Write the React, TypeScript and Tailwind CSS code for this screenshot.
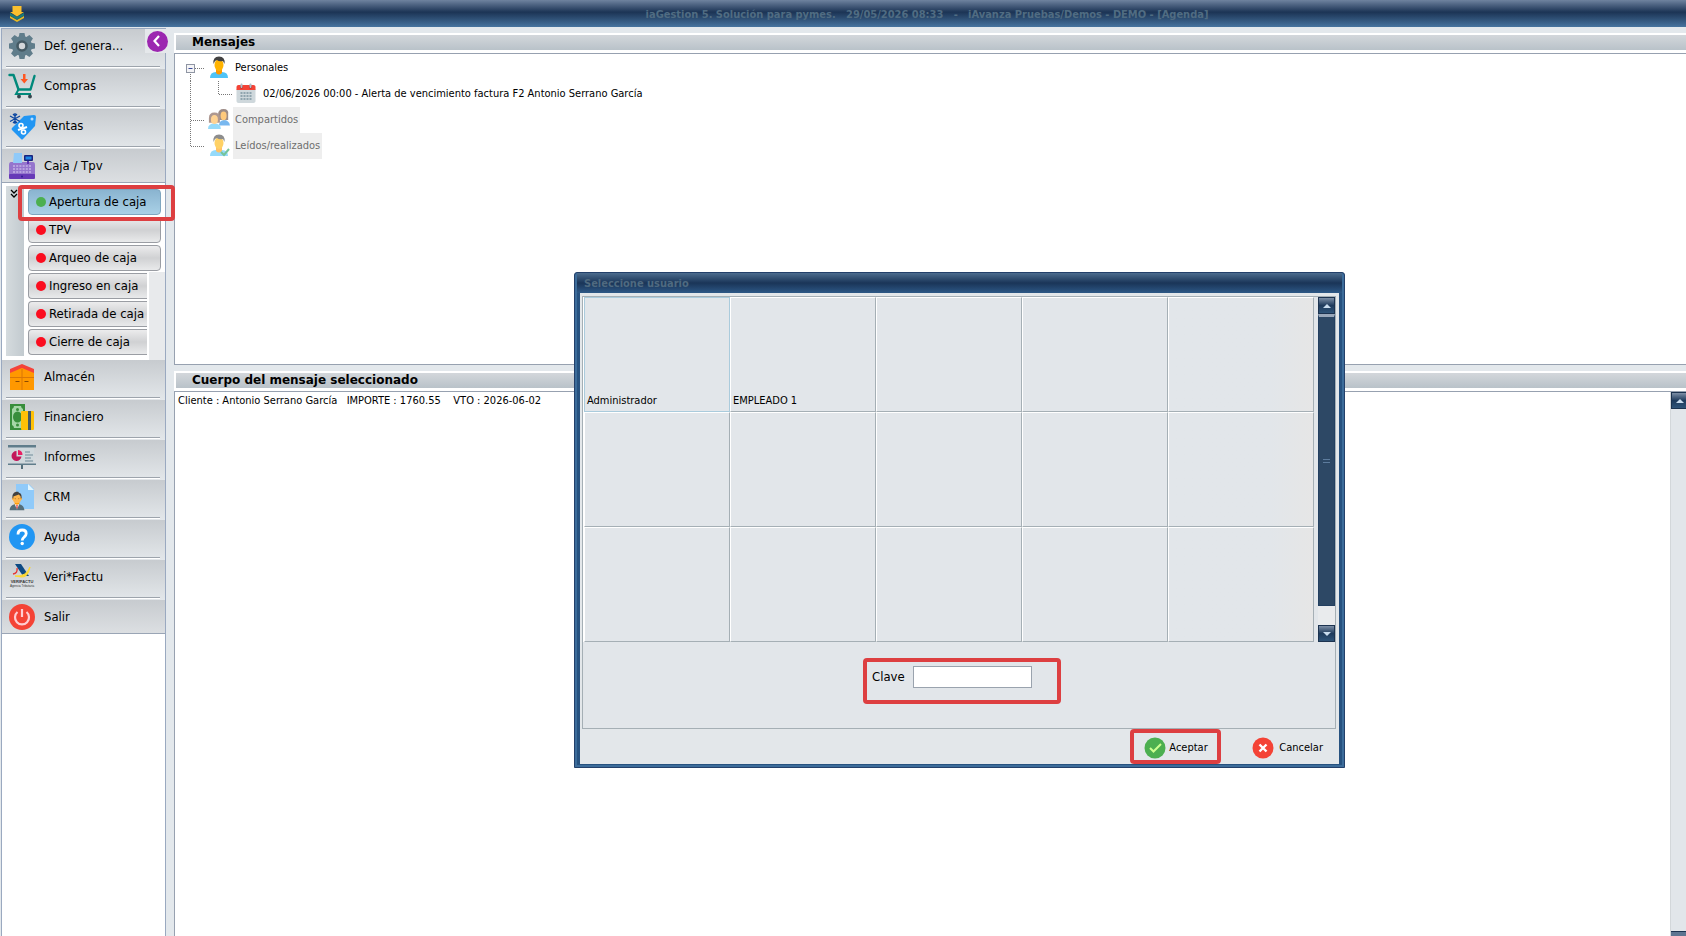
import { useState } from "react";
import type { ReactNode } from "react";
import { FcBusinessman, FcCalendar, FcOk } from "react-icons/fc";

function GearIcon() {
  return (
    <svg viewBox="0 0 28 28" className="w-7 h-7">
      <g fill="#607d8b">
        <circle cx="14" cy="14" r="10" />
        <path d="M10.500 6l1-5h5l1 5zM10.500 22l1 5h5l1-5z" />
        <path d="M10.500 6l1-5h5l1 5zM10.500 22l1 5h5l1-5z" transform="rotate(45 14 14)" />
        <path d="M10.500 6l1-5h5l1 5zM10.500 22l1 5h5l1-5z" transform="rotate(90 14 14)" />
        <path d="M10.500 6l1-5h5l1 5zM10.500 22l1 5h5l1-5z" transform="rotate(135 14 14)" />
      </g>
      <circle cx="14" cy="14" r="4.500" fill="#d3d7da" stroke="#455a64" strokeWidth="2.600" />
    </svg>
  );
}

function CartIcon() {
  return (
    <svg viewBox="0 0 28 28" className="w-7 h-7">
      <path d="M1.500 3h4l5 14.500h12L26.500 4" fill="none" stroke="#00897b" strokeWidth="2.400" strokeLinecap="round" strokeLinejoin="round" />
      <path d="M10.500 17.500L8 22h15" fill="none" stroke="#00897b" strokeWidth="2" />
      <circle cx="11" cy="24.500" r="1.900" fill="#37474f" />
      <circle cx="22" cy="24.500" r="1.900" fill="#37474f" />
      <path d="M15 2h2.500v5H20l-3.700 4.500L12.500 7H15z" fill="#ff5722" />
    </svg>
  );
}

function TagIcon() {
  return (
    <svg viewBox="0 0 28 28" className="w-7 h-7">
      <path d="M16 4l10-1q2 0 2 2l-1 9-12 13q-1 1-2 0l-9-9q-1-1 0-2z" fill="#2196f3" />
      <circle cx="24" cy="7" r="1.500" fill="#bbdefb" />
      <path d="M10 18l9-3" stroke="#fff" strokeWidth="2" />
      <circle cx="13" cy="13.500" r="2" fill="none" stroke="#fff" strokeWidth="1.600" />
      <circle cx="15.500" cy="20" r="2" fill="none" stroke="#fff" strokeWidth="1.600" />
      <path d="M7 1v11M2 4l10 5.500M12 4L2 9.500M5 2l2 2 2-2M5 11l2-2 2 2" stroke="#0d47a1" strokeWidth="1.300" fill="none" />
    </svg>
  );
}

function RegisterIcon() {
  return (
    <svg viewBox="0 0 28 28" className="w-7 h-7">
      <path d="M3 10h22q2 0 2 3v11H1V13q0-3 2-3z" fill="#9575cd" />
      <path d="M6 1h8v10H5z" fill="#90caf9" />
      <path d="M19 7h2v5h-2z" fill="#5e35b1" />
      <rect x="16" y="3" width="9" height="6" rx="1" fill="#1a237e" />
      <rect x="17.500" y="4.500" width="6" height="3" fill="#1e88e5" />
      <rect x="1" y="22" width="26" height="5" rx="1" fill="#673ab7" />
      <path d="M5 14h18M5 17h18M5 20h18" stroke="#c5b3e6" strokeWidth="1.400" strokeDasharray="2 1.200" />
      <circle cx="14" cy="24.500" r="1" fill="#311b92" />
    </svg>
  );
}

function BoxIcon() {
  return (
    <svg viewBox="0 0 28 28" className="w-7 h-7">
      <path d="M2 7l12-5 12 5v20H2z" fill="#ff9800" />
      <path d="M2 6l12-5 12 5v4l-12-5-12 5z" fill="#f4433a" />
      <path d="M2 14.500h24M14 6v21" stroke="#d97706" strokeWidth="1" />
      <path d="M7.500 18.500h4M16.500 18.500h4" stroke="#8d4a00" strokeWidth="1.200" />
    </svg>
  );
}

function MoneyIcon() {
  return (
    <svg viewBox="0 0 28 28" className="w-7 h-7">
      <path d="M2 1h15v26H2z" fill="#388e3c" />
      <path d="M6 3h7q0 2 2 3v16q-2 1-2 3H6q0-2-2-3V6q2-1 2-3z" fill="#a5d6a7" />
      <ellipse cx="9.500" cy="14" rx="4.500" ry="5.500" fill="#388e3c" />
      <circle cx="9.500" cy="6.500" r="1.500" fill="#388e3c" />
      <circle cx="9.500" cy="22" r="1.500" fill="#388e3c" />
      <rect x="13" y="8" width="13" height="19" rx="1" fill="#ffc107" />
      <path d="M20 8h3v19h-3z" fill="#455a64" />
    </svg>
  );
}

function ReportIcon() {
  return (
    <svg viewBox="0 0 28 28" className="w-7 h-7">
      <path d="M2 4h24v16H2z" fill="#cfd8dc" />
      <path d="M0 2h28v2.500H0zM0 20.500h28V22H0z" fill="#607d8b" />
      <path d="M13 22h2v4h-2z" fill="#546e7a" />
      <path d="M8.500 8a5 5 0 1 0 5 5.500h-5z" fill="#c2185b" />
      <path d="M10 7a5 5 0 0 1 4.500 5H10z" fill="#e91e63" />
      <path d="M17 9h5M17 12h8M17 15h6M17 18h8" stroke="#90a4ae" strokeWidth="1.300" />
    </svg>
  );
}

function CrmIcon() {
  return (
    <span className="relative block w-7 h-7">
      <svg viewBox="0 0 28 28" className="w-7 h-7">
        <path d="M8 1h13l5 5v20H8z" fill="#90caf9" />
        <path d="M20 1l6 6h-6z" fill="#e1f5fe" />
      </svg>
      <FcBusinessman className="absolute -left-[2px] -bottom-px w-[22px] h-[22px]" />
    </span>
  );
}

function HelpIcon() {
  return (
    <svg viewBox="0 0 28 28" className="w-7 h-7">
      <circle cx="14" cy="14" r="13" fill="#2196f3" />
      <path d="M10 11.500q0-4.500 4.200-4.500 4 0 4 3.600 0 2-2 3.400-2 1.500-2 3.500" fill="none" stroke="#fff" strokeWidth="2.800" />
      <circle cx="14.200" cy="20.500" r="1.700" fill="#fff" />
    </svg>
  );
}

function VerifactuIcon() {
  return (
    <svg viewBox="0 0 28 28" className="w-7 h-7">
      <path d="M7 1h6l8 12h-6z" fill="#0d4a84" />
      <path d="M9 5q1 5-4 6" stroke="#e53935" strokeWidth="1.400" fill="none" />
      <path d="M7 13q11 1 15-9-2 11-9 10z" fill="#fdd835" stroke="#fdd835" />
      <text x="14" y="20" textAnchor="middle" fontSize="4" fontWeight="bold" fontFamily="Liberation Sans, sans-serif" fill="#333">VERIFACTU</text>
      <text x="14" y="24" textAnchor="middle" fontSize="3" fontFamily="Liberation Sans, sans-serif" fill="#333">Agencia Tributaria</text>
    </svg>
  );
}

function PowerIcon() {
  return (
    <svg viewBox="0 0 28 28" className="w-7 h-7">
      <circle cx="14" cy="14" r="13" fill="#f44336" />
      <path d="M9.500 9a7 7 0 1 0 9 0M14 6v8" fill="none" stroke="#ffcdd2" strokeWidth="2.200" />
    </svg>
  );
}

function PersonIcon({ check = false }: { check?: boolean }) {
  return (
    <svg viewBox="0 0 22 24" className="w-[22px] h-6">
      <path d="M2 23q0-6 6-6h6q6 0 6 6z" fill="#4fc3f7" />
      <path d="M8 13h6v5q-3 3-6 0z" fill="#ff9800" />
      <ellipse cx="11" cy="10" rx="4.500" ry="6" fill="#ffb300" />
      <path d="M5.500 9q-1-7.500 5.500-7.500T16.500 9l-1.500-3q-4 1-6-1l-2 1z" fill="#424242" />
      {check && <path d="M13 19l3 3 5-6" fill="none" stroke="#1b9e5a" strokeWidth="2" />}
    </svg>
  );
}

function PeopleIcon() {
  return (
    <svg viewBox="0 0 24 24" className="w-[22px] h-6">
      <path d="M12 19q0-5 5-6 6 0 7 6z" fill="#1e88e5" />
      <path d="M11 12V7q0-6 6-6t5 6v6H12z" fill="#5d4037" />
      <ellipse cx="17" cy="8.500" rx="3.300" ry="4.800" fill="#ffa726" />
      <path d="M0 23q0-6 7-6t7 6z" fill="#4fc3f7" />
      <path d="M1 16v-5q0-6 6-6t6 6v5z" fill="#795548" />
      <ellipse cx="7" cy="12.500" rx="3.800" ry="5" fill="#ffb74d" />
    </svg>
  );
}

function CancelIcon() {
  return (
    <svg viewBox="0 0 22 22" className="w-[22px] h-[22px]">
      <circle cx="11" cy="11" r="10.500" fill="#f44336" />
      <path d="M7.500 7.500l7 7M14.500 7.500l-7 7" stroke="#fff" strokeWidth="2.400" />
    </svg>
  );
}

function AppLogo() {
  return (
    <svg viewBox="0 0 16 18" className="w-4 h-[18px]">
      <path d="M1 11l7 4 7-4v2l-7 4-7-4z" fill="#e8b923" />
      <path d="M1 8l7 4 7-4v2.500l-7 4-7-4z" fill="#1a7f7a" />
      <path d="M3.500 1h9v6H15l-7 4.500L1 7h2.500z" fill="#fbc02d" />
    </svg>
  );
}

interface MenuEntry {
  label: string;
  icon: ReactNode;
}

const topMenu: MenuEntry[] = [
  { label: "Def. genera...", icon: <GearIcon /> },
  { label: "Compras", icon: <CartIcon /> },
  { label: "Ventas", icon: <TagIcon /> },
  { label: "Caja / Tpv", icon: <RegisterIcon /> },
];

const bottomMenu: MenuEntry[] = [
  { label: "Almacén", icon: <BoxIcon /> },
  { label: "Financiero", icon: <MoneyIcon /> },
  { label: "Informes", icon: <ReportIcon /> },
  { label: "CRM", icon: <CrmIcon /> },
  { label: "Ayuda", icon: <HelpIcon /> },
  { label: "Veri*Factu", icon: <VerifactuIcon /> },
  { label: "Salir", icon: <PowerIcon /> },
];

const cashMenu = ["TPV", "Arqueo de caja", "Ingreso en caja", "Retirada de caja", "Cierre de caja"];

const users = ["Administrador", "EMPLEADO 1", "", "", "", "", "", "", "", "", "", "", "", "", ""];

function MenuGroup({ items }: { items: MenuEntry[] }) {
  return (
    <ul>
      {items.map((item, i) => {
        const last = i === items.length - 1;
        return (
          <li
            key={item.label}
            className={
              last
                ? "h-[34px] bg-linear-to-b from-[#c7cbcf] to-[#dcdfe2] border-b border-[#9aa5b5]"
                : "h-10 bg-linear-to-b from-[#c7cbcf] to-[#e3e7ea]"
            }
          >
            <button type="button" className="flex items-center w-full h-[33px] pl-[6px] gap-2 text-left text-[13px]">
              {item.icon}
              <span>{item.label}</span>
            </button>
            {!last && <div className="mt-1 ml-1 mr-[5px] h-[2px] bg-white border-t border-[#9da4ac]" />}
          </li>
        );
      })}
    </ul>
  );
}

function CashButton({ label, active = false, short = false }: { label: string; active?: boolean; short?: boolean }) {
  const look = active
    ? "bg-linear-to-b from-[#8ab4d0] to-[#a9d0e6] border-[#7fa6bf]"
    : "bg-linear-to-b from-[#ececed] via-[#d0d1d3] to-[#e9eaeb] border-[#9a9da3]";
  const shape = short ? "w-[119px] rounded-l-[4px] border-r-0" : "w-[133px] rounded-[4px]";
  return (
    <button
      type="button"
      className={`flex items-center gap-[3px] h-[26px] pl-[7px] border text-[13px] whitespace-nowrap ${look} ${shape}`}
    >
      <span className={`w-[10px] h-[10px] rounded-full shrink-0 ${active ? "bg-[#4caf50]" : "bg-[#fb0d1f]"}`} />
      {label}
    </button>
  );
}

function Sidebar() {
  return (
    <aside className="relative flex flex-col w-[165px] shrink-0 ml-px mr-2 mt-px bg-white border-x border-t border-[#9aa9c0]">
      <MenuGroup items={topMenu} />
      <div className="relative flex h-[177px] pt-[3px] pl-1">
        <div className="w-[18px] h-[170px] pt-[3px] pl-1 bg-linear-to-r from-[#d5dbde] to-[#c2cacf]">
          <svg viewBox="0 0 8 10" className="w-2 h-[10px]">
            <path d="M1 1l3 3 3-3M1 5l3 3 3-3" fill="none" stroke="#000" strokeWidth="1.300" />
          </svg>
        </div>
        <div className="flex flex-col gap-[2px] pl-1 pt-[3px]">
          <CashButton label="Apertura de caja" active />
          {cashMenu.map((label, i) => (
            <CashButton key={label} label={label} short={i > 1} />
          ))}
        </div>
        <div className="absolute right-0 bottom-0 w-4 h-[88px] bg-[#e8eaec]" />
        <div className="absolute left-4 top-[2px] z-10 w-[157px] h-9 border-4 border-[#dd3f41] rounded-[4px] pointer-events-none" />
      </div>
      <MenuGroup items={bottomMenu} />
      <div className="absolute top-0 -right-1 w-6 h-6 bg-[#e5e8eb] flex items-center justify-center">
        <button type="button" aria-label="Contraer menú" className="flex items-center justify-center w-[21px] h-[21px] rounded-full bg-[#9c27b0]">
          <svg viewBox="0 0 12 12" className="w-3 h-3">
            <path d="M8 1L3.500 6 8 11" fill="none" stroke="#fff" strokeWidth="2.200" />
          </svg>
        </button>
      </div>
    </aside>
  );
}

function SectionTitle({ children }: { children: string }) {
  return (
    <div className="h-5 pt-[2px] pb-[3px] pl-[2px] bg-white">
      <h2 className="h-[15px] pl-4 font-['Verdana','DejaVu_Sans',sans-serif] font-bold text-[12px] leading-[15px] bg-linear-to-b from-[#d3d7db] to-[#b9c2c9]">
        {children}
      </h2>
    </div>
  );
}

function MessageTree() {
  return (
    <ul className="pl-[9px] pt-px text-[11px] leading-[26px]">
      <li className="flex h-[26px]">
        <svg viewBox="0 0 24 26" className="w-6 h-[26px] shrink-0">
          <rect x="2.500" y="9.500" width="8" height="8" fill="#f4f4f6" stroke="#8f95a3" />
          <path d="M4.500 13.500h4" stroke="#3a4b9a" />
          <path d="M11 13.500h10M6.500 19v7" stroke="#777" strokeDasharray="1 1" />
        </svg>
        <PersonIcon />
        <span className="ml-[3px] px-[2px]">Personales</span>
      </li>
      <li className="flex items-center h-[26px]">
        <svg viewBox="0 0 50 26" className="w-[50px] h-[26px] shrink-0">
          <path d="M6.500 0v26M34.500 0v13.500M35 13.500h14" fill="none" stroke="#777" strokeDasharray="1 1" />
        </svg>
        <FcCalendar className="w-6 h-6" />
        <span className="ml-[3px] px-[2px]">02/06/2026 00:00 - Alerta de vencimiento factura F2 Antonio Serrano García</span>
      </li>
      <li className="flex h-[26px] text-[#6f6f6f]">
        <svg viewBox="0 0 24 26" className="w-6 h-[26px] shrink-0">
          <path d="M6.500 0v26M7 13.500h14" fill="none" stroke="#777" strokeDasharray="1 1" />
        </svg>
        <span className="opacity-60">
          <PeopleIcon />
        </span>
        <span className="ml-[3px] px-[2px] bg-[#eeeeee]">Compartidos</span>
      </li>
      <li className="flex h-[26px] text-[#6f6f6f]">
        <svg viewBox="0 0 24 26" className="w-6 h-[26px] shrink-0">
          <path d="M6.500 0v13M7 13.500h14" fill="none" stroke="#777" strokeDasharray="1 1" />
        </svg>
        <span className="opacity-60">
          <PersonIcon check />
        </span>
        <span className="ml-[3px] px-[2px] bg-[#eeeeee]">Leídos/realizados</span>
      </li>
    </ul>
  );
}

function ScrollButton({ direction }: { direction: "up" | "down" }) {
  return (
    <button
      type="button"
      aria-label={direction === "up" ? "Subir" : "Bajar"}
      className="flex items-center justify-center w-[17px] h-[17px] shrink-0 border border-[#1c3350] bg-linear-to-b from-[#7d8fa6] via-[#1f3b5c] to-[#2f5479]"
    >
      <svg viewBox="0 0 8 4" className="w-2 h-1">
        <path d={direction === "up" ? "M0 4l4-4 4 4z" : "M0 0l4 4 4-4z"} fill="#c9dcee" />
      </svg>
    </button>
  );
}

function UserDialog() {
  const [selected, setSelected] = useState(0);
  const [password, setPassword] = useState("");

  return (
    <section
      role="dialog"
      aria-labelledby="dialog-title"
      className="absolute left-[574px] top-[272px] w-[771px] px-[5px] pb-[3px] rounded-t-[3px] bg-[#275280] border border-[#23406a] shadow-[inset_0_0_0_2px_#3c6c9a]"
    >
      <h1
        id="dialog-title"
        className="h-5 -mx-[3px] pl-[7px] pt-px font-bold text-[11px] leading-5 text-[#4f6a80] bg-linear-to-b from-[#4c6c8e] via-[#1a3558] to-[#2d5886]"
      >
        Seleccione usuario
      </h1>
      <form className="pl-[2px] pr-[3px] pt-[3px] bg-[#e3e7ea]" onSubmit={(e) => e.preventDefault()}>
        <div className="border border-[#a5afb5] bg-[#e2e6ea]">
          <div className="flex justify-between border-l border-white">
            <div className="grid grid-cols-[repeat(5,146px)] auto-rows-[115px]">
              {users.map((user, i) => (
                <button
                  key={i}
                  type="button"
                  onClick={() => setSelected(i)}
                  className={`flex items-end px-[2px] pb-[2px] text-left text-[11px] leading-4 border ${
                    i === selected
                      ? "border-[#aacbdc]"
                      : "border-t-white border-l-white border-r-[#a5afb5] border-b-[#a5afb5]"
                  } ${i % 5 === 4 ? "bg-linear-to-r from-[#e2e6ea] from-70% to-[#e6e6e6]" : ""}`}
                >
                  {user}
                </button>
              ))}
            </div>
            <div className="flex flex-col w-[17px] bg-[#e9ebed]">
              <ScrollButton direction="up" />
              <div className="flex flex-col justify-center h-[292px] border border-t-[3px] border-[#223f60] border-t-[#9aa8ba] bg-[#2d4865]">
                <div className="mx-1 h-1 border-y border-[#5d7c9d]" />
              </div>
              <div className="flex-1" />
              <ScrollButton direction="down" />
            </div>
          </div>
          <div className="flex justify-center pt-4 pb-6 pl-[6px]">
            <div className="flex items-start w-[198px] h-[46px] pl-[5px] pt-1 border-4 border-[#dd3f41] rounded-[4px]">
              <label htmlFor="clave" className="w-[41px] text-[13px] leading-[22px]">
                Clave
              </label>
              <input
                id="clave"
                type="password"
                value={password}
                onChange={(e) => setPassword(e.target.value)}
                className="w-[119px] h-[22px] px-1 bg-white border border-[#9aa3ae] outline-none"
              />
            </div>
          </div>
        </div>
        <div className="flex justify-end gap-[27px] pr-[13px] h-[35px] text-[11px]">
          <button type="submit" className="flex items-center gap-[2px] w-[91px] pl-[9px] pt-[3px] border-4 border-[#dd3f41] rounded-[4px]">
            <FcOk className="w-6 h-6 shrink-0" />
            Aceptar
          </button>
          <button type="button" className="flex items-center gap-[5px] pl-1 pt-[3px]">
            <CancelIcon />
            Cancelar
          </button>
        </div>
      </form>
    </section>
  );
}

export default function App() {
  return (
    <div className="relative flex flex-col h-screen overflow-hidden bg-[#e3e8ec] text-black font-['Tahoma','DejaVu_Sans_Condensed','DejaVu_Sans',sans-serif]">
      <header className="flex items-center h-[27px] shrink-0 pl-[9px] bg-linear-to-b from-[#6f839f] via-[#1c3455] via-45% to-[#47749f]">
        <AppLogo />
        <p className="flex-1 pl-[143px] pt-[3px] text-center text-[11px] font-bold whitespace-pre text-[#506c82]">
          {"iaGestion 5. Solución para pymes.   29/05/2026 08:33   -   iAvanza Pruebas/Demos - DEMO - [Agenda]"}
        </p>
      </header>
      <div className="flex flex-1 min-h-0">
        <Sidebar />
        <main className="flex flex-col flex-1 min-w-0 pt-[6px]">
          <SectionTitle>Mensajes</SectionTitle>
          <section className="h-[312px] shrink-0 bg-white border border-r-0 border-[#97a1b0]">
            <MessageTree />
          </section>
          <div className="mt-[6px]">
            <SectionTitle>Cuerpo del mensaje seleccionado</SectionTitle>
          </div>
          <section className="flex flex-1 min-h-0 bg-white border-t border-l border-[#97a1b0]">
            <p className="flex-1 px-[3px] pt-px text-[11px] leading-4 whitespace-pre">
              {"Cliente : Antonio Serrano García   IMPORTE : 1760.55    VTO : 2026-06-02"}
            </p>
            <div className="flex flex-col justify-between w-4 overflow-hidden bg-[#e2e6ea] border-l border-[#d3d7da]">
              <ScrollButton direction="up" />
              <div className="h-[5px] bg-[#5d7591] border-t border-[#1c3350]" />
            </div>
          </section>
        </main>
      </div>
      <UserDialog />
    </div>
  );
}
